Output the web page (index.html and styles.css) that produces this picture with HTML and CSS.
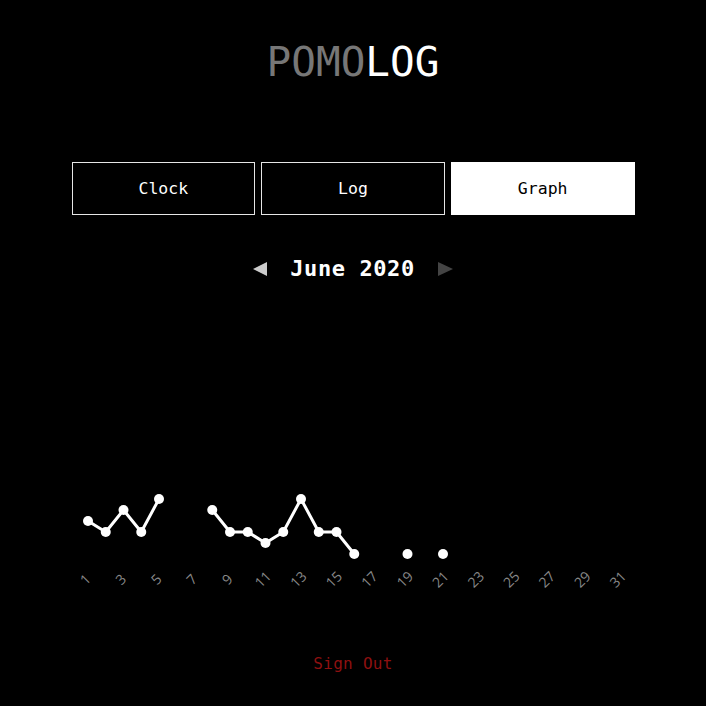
FILE: index.html
```html
<!DOCTYPE html>
<html>
<head>
<meta charset="utf-8">
<link rel="stylesheet" href="styles.css">
</head>
<body>
<main class="app">
  <h1 class="title"><span class="dim">POMO</span><span class="bright">LOG</span></h1>
  <nav class="tabs">
    <button class="tab">Clock</button>
    <button class="tab">Log</button>
    <button class="tab active">Graph</button>
  </nav>
  <div class="month-nav">
    <span class="arrow left"></span>
    <span class="month">June 2020</span>
    <span class="arrow right"></span>
  </div>
  <svg class="chart" width="563" height="120" viewBox="0 0 563 120">
    <g class="lines" fill="none" stroke="#fff" stroke-width="3" stroke-linejoin="round">
      <polyline points="16,39 33.75,50 51.5,28 69.25,50 87,17"/>
      <polyline points="140.25,28 158,50 175.75,50 193.5,61 211.25,50 229,17 246.75,50 264.5,50 282.25,72"/>
    </g>
    <g class="dots" fill="#fff">
      <circle cx="16" cy="39" r="5"/>
      <circle cx="33.75" cy="50" r="5"/>
      <circle cx="51.5" cy="28" r="5"/>
      <circle cx="69.25" cy="50" r="5"/>
      <circle cx="87" cy="17" r="5"/>
      <circle cx="140.25" cy="28" r="5"/>
      <circle cx="158" cy="50" r="5"/>
      <circle cx="175.75" cy="50" r="5"/>
      <circle cx="193.5" cy="61" r="5"/>
      <circle cx="211.25" cy="50" r="5"/>
      <circle cx="229" cy="17" r="5"/>
      <circle cx="246.75" cy="50" r="5"/>
      <circle cx="264.5" cy="50" r="5"/>
      <circle cx="282.25" cy="72" r="5"/>
      <circle cx="335.5" cy="72" r="5"/>
      <circle cx="371" cy="72" r="5"/>
    </g>
    <g class="labels" fill="#888">
      <g transform="translate(13 97) rotate(-45)"><text>1</text></g>
      <g transform="translate(48.5 97) rotate(-45)"><text>3</text></g>
      <g transform="translate(84 97) rotate(-45)"><text>5</text></g>
      <g transform="translate(119.5 97) rotate(-45)"><text>7</text></g>
      <g transform="translate(155 97) rotate(-45)"><text>9</text></g>
      <g transform="translate(190.5 97) rotate(-45)"><text>11</text></g>
      <g transform="translate(226 97) rotate(-45)"><text>13</text></g>
      <g transform="translate(261.5 97) rotate(-45)"><text>15</text></g>
      <g transform="translate(297 97) rotate(-45)"><text>17</text></g>
      <g transform="translate(332.5 97) rotate(-45)"><text>19</text></g>
      <g transform="translate(368 97) rotate(-45)"><text>21</text></g>
      <g transform="translate(403.5 97) rotate(-45)"><text>23</text></g>
      <g transform="translate(439 97) rotate(-45)"><text>25</text></g>
      <g transform="translate(474.5 97) rotate(-45)"><text>27</text></g>
      <g transform="translate(510 97) rotate(-45)"><text>29</text></g>
      <g transform="translate(545.5 97) rotate(-45)"><text>31</text></g>
    </g>
  </svg>
  <a class="signout">Sign Out</a>
</main>
</body>
</html>
```

FILE: styles.css
```css
html, body {
  margin: 0;
  padding: 0;
  background: #000;
  height: 100%;
}

body {
  font-family: "DejaVu Sans Mono", monospace;
  color: #fff;
}

.app {
  display: flex;
  flex-direction: column;
  align-items: center;
}

.title {
  margin: 38px 0 0;
  height: 48px;
  font-size: 41px;
  line-height: 48px;
  font-weight: normal;
  font-family: "DejaVu Sans Mono", monospace;
}

.dim { color: #777; }
.bright { color: #fff; }

.tabs {
  margin-top: 76px;
  display: flex;
  gap: 6px;
  width: 563px;
}

.tab {
  flex: 1;
  height: 53px;
  background: #000;
  color: #fff;
  border: 1px solid #e6e6e6;
  font-family: "DejaVu Sans Mono", monospace;
  font-size: 16.5px;
  padding: 0;
  margin: 0;
}

.tab.active {
  background: #fff;
  color: #000;
  border-color: #fff;
}

.month-nav {
  margin-top: 39px;
  height: 30px;
  display: flex;
  align-items: center;
  gap: 23px;
}

.month {
  font-size: 22px;
  font-weight: bold;
  letter-spacing: 0.6px;
  line-height: 30px;
}

.arrow {
  width: 0;
  height: 0;
  border-top: 7px solid transparent;
  border-bottom: 7px solid transparent;
}

.arrow.left {
  border-right: 14px solid #cccccc;
}

.arrow.right {
  border-left: 15px solid #444;
}

.chart {
  margin-top: 198px;
  display: block;
}

.labels text {
  font-family: "Open Sans", "DejaVu Sans", sans-serif;
  font-size: 14px;
  text-anchor: middle;
  dominant-baseline: central;
}

.signout {
  margin-top: 52px;
  color: #8e1010;
  font-size: 16px;
  line-height: 20px;
  letter-spacing: 0.3px;
  cursor: pointer;
}
```
